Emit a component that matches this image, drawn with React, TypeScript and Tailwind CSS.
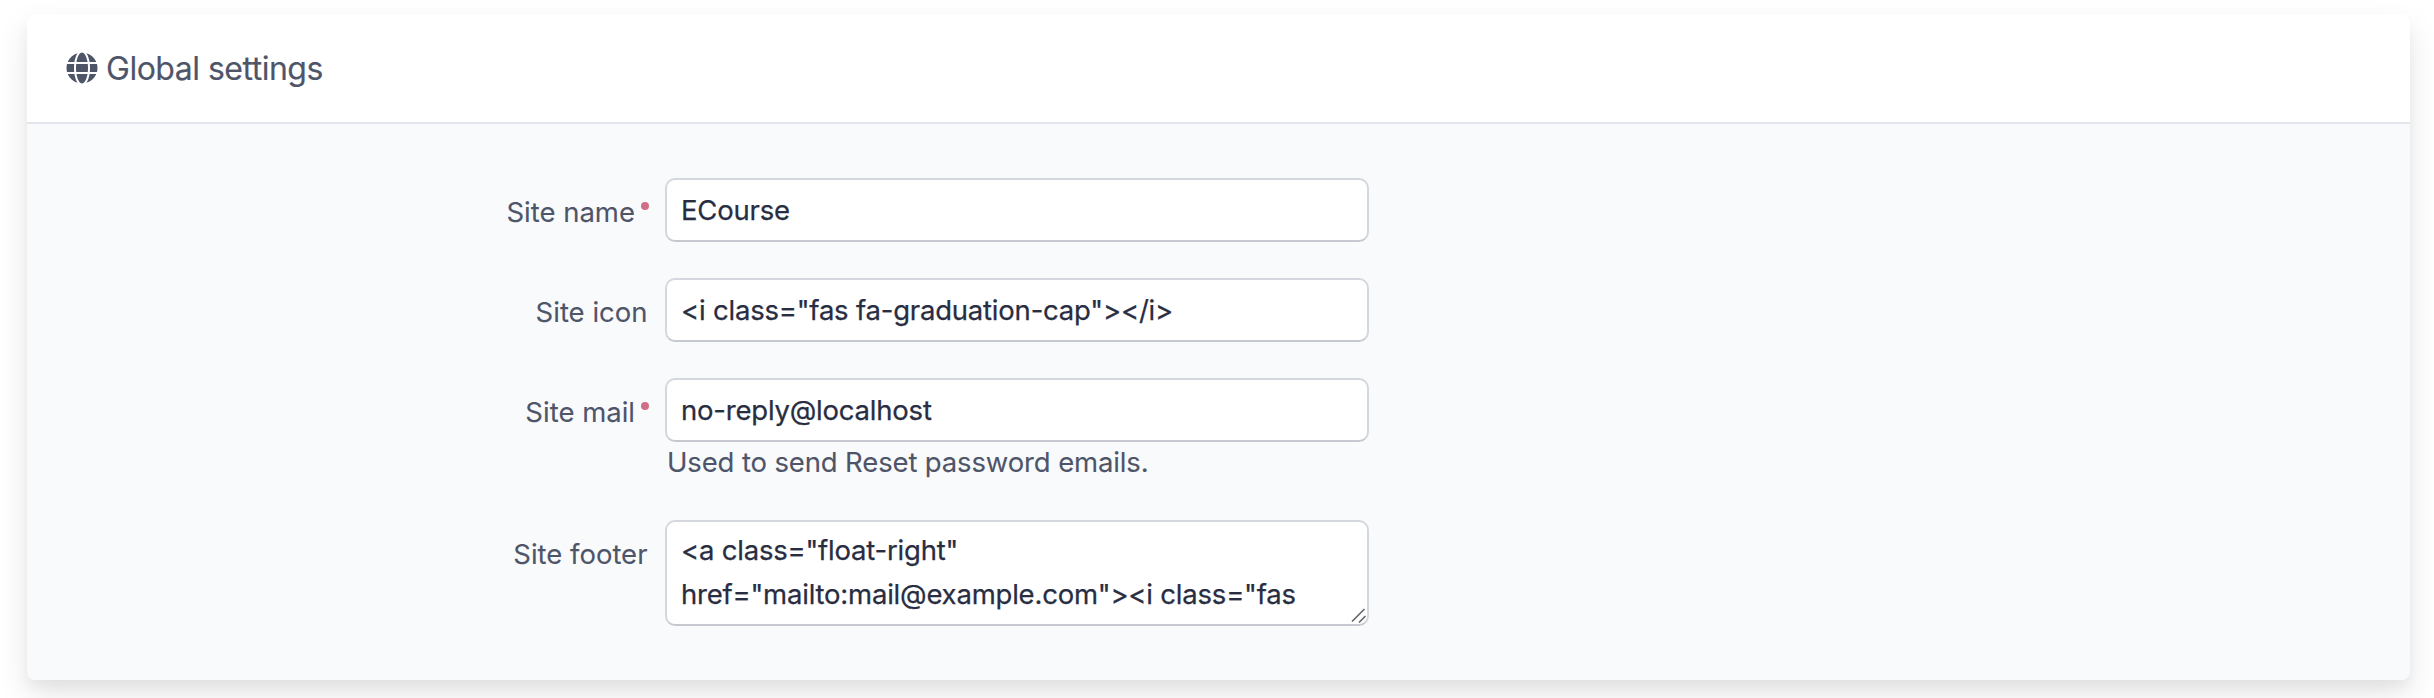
import React from "react";
import { FaGlobe } from "react-icons/fa";

const control =
  "block w-[704px] rounded-[10px] border-2 border-[#d5d7de] border-b-[#c7c9d1] bg-white px-[14px] text-[27.5px] tracking-[-0.21px] text-[#292d42] outline-none [-webkit-text-stroke:0.25px_#292d42]";

function Row({
  id,
  label,
  required = false,
  children,
}: {
  id: string;
  label: string;
  required?: boolean;
  children: React.ReactNode;
}) {
  return (
    <div className="flex items-start">
      <label
        htmlFor={id}
        className={`mr-4 flex w-[622px] items-start justify-end pt-3 text-[27.5px] leading-[44px] text-[#4f5569] [-webkit-text-stroke:0.1px_#4f5569] ${
          required ? "" : "pr-[1.5px]"
        }`}
      >
        {label}
        {required && <span className="mt-3 ml-[6px] size-2 rounded-full bg-[#cf7084]" />}
      </label>
      <div>{children}</div>
    </div>
  );
}

export default function App() {
  return (
    <div className="h-[698px] w-[2434px] overflow-hidden bg-white pt-[14px] pl-[27px] font-['Inter',sans-serif]">
      <section className="h-[666px] w-[2383px] overflow-hidden rounded-[8px] bg-[#f9fafc] shadow-[0_14px_32px_rgba(0,0,0,0.1),0_8px_12px_rgba(0,0,0,0.035)]">
        <header className="flex h-[110px] items-center gap-[8px] border-b-2 border-[#e4e6ee] bg-white pl-[39px] text-[#4f5569]">
          <FaGlobe className="size-8" />
          <h1 className="pt-[2px] text-[32px] leading-10 tracking-[-0.5px] [-webkit-text-stroke:0.15px_#4f5569]">
            Global settings
          </h1>
        </header>
        <form className="flex flex-col pt-[54px]">
          <div className="flex flex-col gap-9">
            <Row id="name" label="Site name" required>
              <input id="name" className={`${control} h-16`} defaultValue="ECourse" />
            </Row>
            <Row id="icon" label="Site icon">
              <input
                id="icon"
                className={`${control} h-16`}
                defaultValue={'<i class="fas fa-graduation-cap"></i>'}
              />
            </Row>
            <Row id="mail" label="Site mail" required>
              <input id="mail" className={`${control} h-16`} defaultValue="no-reply@localhost" />
              <p className="h-[42px] pl-[2px] text-[27.5px] leading-[40px] tracking-[-0.14px] text-[#4f5569] [-webkit-text-stroke:0.1px_#4f5569]">
                Used to send Reset password emails.
              </p>
            </Row>
            <Row id="footer" label="Site footer">
              <div className="relative">
                <textarea
                  id="footer"
                  className={`${control} h-[106px] resize-none overflow-hidden pt-[6px] leading-[44px]`}
                  defaultValue={'<a class="float-right"\nhref="mailto:mail@example.com"><i class="fas'}
                />
                <svg
                  className="absolute right-[3px] bottom-[2px]"
                  width="15"
                  height="16"
                  viewBox="0 0 15 16"
                  stroke="#66686c"
                  strokeWidth="1.7"
                  strokeLinecap="round"
                >
                  <path d="M1.5 13L13 1.5M8.5 14L14 8.5" />
                </svg>
              </div>
            </Row>
          </div>
        </form>
      </section>
    </div>
  );
}
